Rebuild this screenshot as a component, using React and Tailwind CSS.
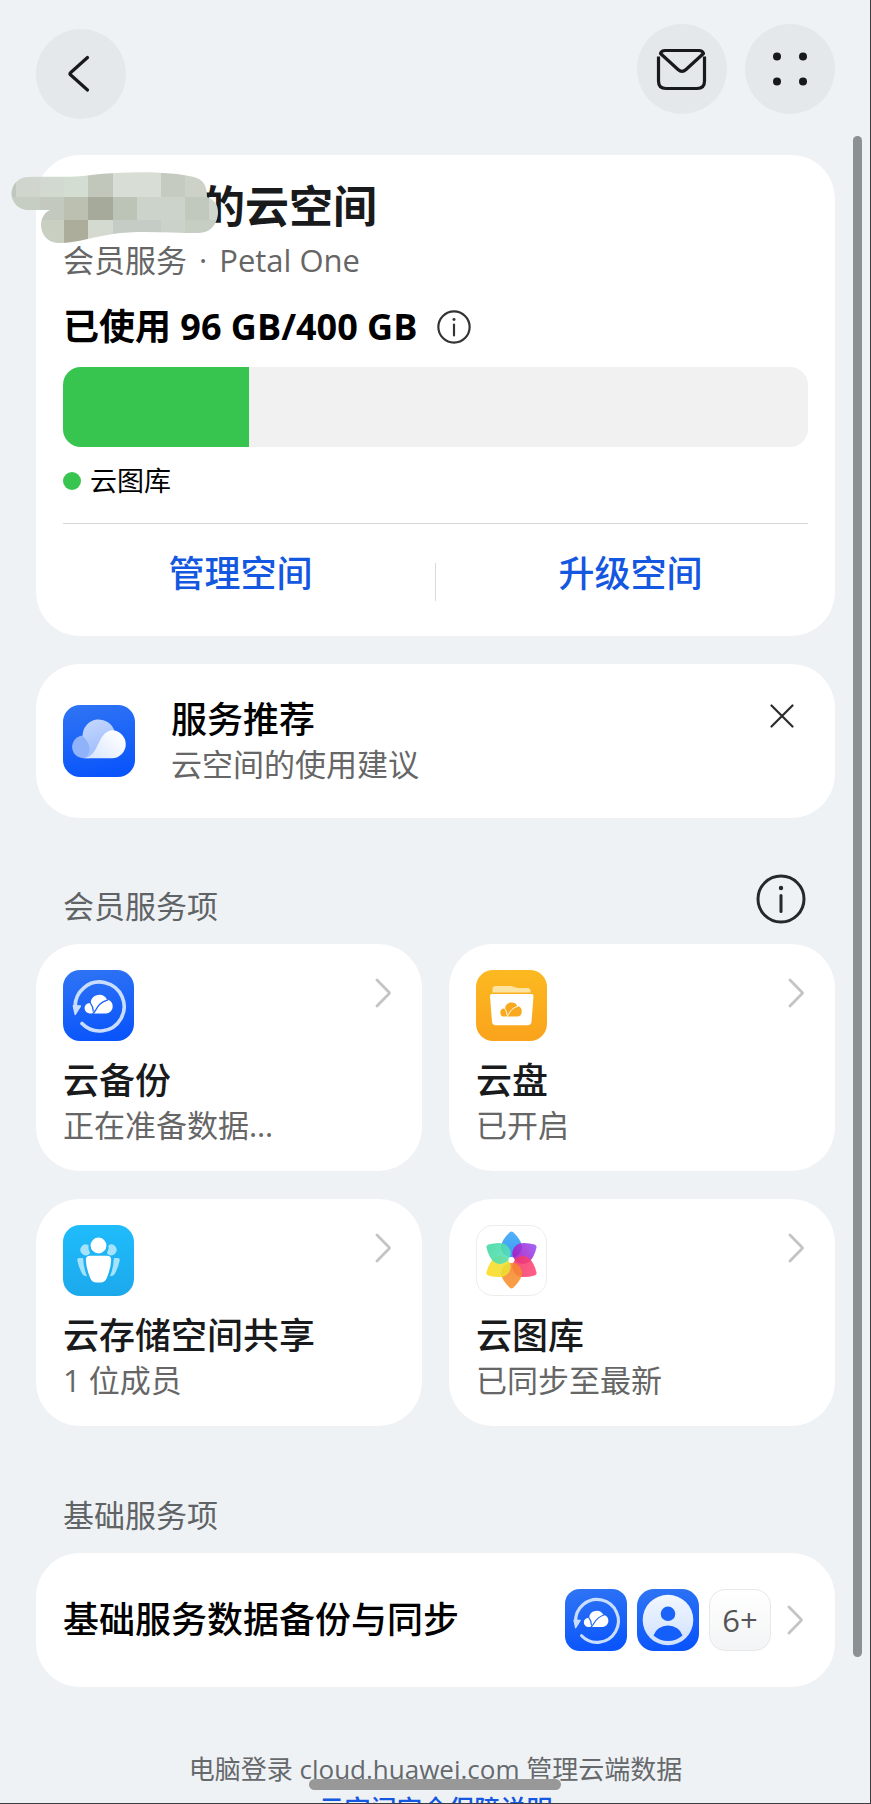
import React, { useId, useState } from "react";

const Cloud = ({ fill, line }) => (
  <>
    <path
      fill={fill}
      d="M5.5 19.5a5.3 5.3 0 0 1-.3-10.6h.9A8.7 8.7 0 0 1 22.4 5.4 6.8 7.1 0 0 1 22 19.5Z"
    />
    <path
      d="M5.5 8.3c2 2.6 3.2 6 3.3 9.2M8 19.8c4.5-2.8 4-11 15.5-14"
      fill="none"
      stroke={line}
      strokeWidth="1.3"
    />
  </>
);

const BlueTile = ({ id, size = 71 }) => (
  <>
    <defs>
      <linearGradient id={id} x1="0.2" y1="0" x2="0.4" y2="1">
        <stop offset="0" stopColor="#2f74f4" />
        <stop offset="1" stopColor="#0a55fb" />
      </linearGradient>
    </defs>
    <rect width={size} height={size} rx="17" fill={`url(#${id})`} />
  </>
);

const BackupIcon = ({ className }) => {
  const id = useId();
  return (
    <svg viewBox="0 0 71 71" className={className} aria-hidden="true">
      <BlueTile id={id} />
      <path
        d="M19 53.5A24.5 24.5 0 1 0 12.2 38"
        fill="none"
        stroke="#c9defe"
        strokeWidth="3.6"
        strokeLinecap="round"
      />
      <path
        d="M10.4 35.8l7 .2-5.2 8.4Z"
        fill="#c9defe"
        stroke="#c9defe"
        strokeWidth="1.5"
        strokeLinejoin="round"
      />
      <g transform="translate(21.5 24)">
        <Cloud fill="#ffffff" line="#1a62f8" />
      </g>
    </svg>
  );
};

const DriveIcon = ({ className }) => {
  const id = useId();
  return (
    <svg viewBox="0 0 71 71" className={className} aria-hidden="true">
      <defs>
        <linearGradient id={id} x1="0" y1="0" x2="0" y2="1">
          <stop offset="0" stopColor="#fcb920" />
          <stop offset="1" stopColor="#faa31c" />
        </linearGradient>
      </defs>
      <rect width="71" height="71" rx="17" fill={`url(#${id})`} />
      <path
        d="M16.5 22.5v-3.5q0-3 3-3h15q2 0 4 1l1.5.6q1 .4 2.500.4h9q3 0 3 3v1.5Z"
        fill="#fde3a2"
      />
      <path
        d="M16 24h39.5q2.200 0 2 2.200l-2 25.600q-.4 3.400-3.600 3.400H19.600q-3.200 0-3.600-3.400l-2-25.600q-.2-2.200 2-2.200Z"
        fill="#ffffff"
      />
      <g transform="translate(24.3 31.8) scale(0.76)">
        <Cloud fill="#f9a91d" line="#ffffff" />
      </g>
    </svg>
  );
};

const ShareIcon = ({ className }) => {
  const id = useId();
  return (
    <svg viewBox="0 0 71 71" className={className} aria-hidden="true">
      <defs>
        <linearGradient id={id} x1="0" y1="0" x2="0" y2="1">
          <stop offset="0" stopColor="#1fbcfb" />
          <stop offset="1" stopColor="#1ca9ec" />
        </linearGradient>
      </defs>
      <rect width="71" height="71" rx="17" fill={`url(#${id})`} />
      <g fill="#a4e2fd">
        <path d="M25.5 20.2a5.4 5.4 0 1 0 .6 9l1-1.2a11 11 0 0 1-1.6-7.8Z" />
        <path d="M45.5 20.2a5.4 5.4 0 1 1-.6 9l-1-1.2a11 11 0 0 0 1.6-7.8Z" />
        <path d="M16 33h3.5q.6 0 .7.8.2 9 3.8 17.4-3.6 0-5.2-3.2Q15.5 42 14.2 35q0-1.8 1.8-2Z" />
        <path d="M55 33h-3.5q-.6 0-.7.8-.2 9-3.8 17.4 3.6 0 5.2-3.2Q55.5 42 56.8 35q0-1.8-1.8-2Z" />
      </g>
      <circle cx="35.5" cy="20.5" r="7.9" fill="#fff" />
      <path
        d="M27 30.8h17q4.3 0 4.2 4.2-.4 8-4.2 17.5-1.8 5-6.5 5h-4q-4.7 0-6.5-5Q23.2 43 22.8 35q-.1-4.2 4.2-4.2Z"
        fill="#fff"
      />
    </svg>
  );
};

const petals = [
  { angle: 0, from: "#3ba7f9", to: "#1f8df0" },
  { angle: 60, from: "#9550f2", to: "#b013bd" },
  { angle: 120, from: "#ff4a78", to: "#f2376b" },
  { angle: 180, from: "#f9922c", to: "#f58430" },
  { angle: 240, from: "#ffd91c", to: "#e6e23c" },
  { angle: 300, from: "#3fd9a0", to: "#5ce0b8" },
];

const GalleryIcon = ({ className }) => {
  const id = useId();
  return (
    <svg viewBox="0 0 72 72" className={className} aria-hidden="true">
      <rect x="0.5" y="0.5" width="71" height="71" rx="17" fill="#fff" stroke="#ededed" />
      {petals.map((p, i) => (
        <g key={p.angle} transform={`rotate(${p.angle} 36 35.5)`}>
          <defs>
            <linearGradient id={`${id}${i}`} x1="0" y1="0" x2="0" y2="1">
              <stop offset="0" stopColor={p.from} />
              <stop offset="1" stopColor={p.to} />
            </linearGradient>
          </defs>
          <path
            d="M34.2 7.300q1.800-1.600 3.600 0Q44.800 14 46.400 20.200A10.600 10.600 0 1 1 25.600 20.200Q27.200 14 34.200 7.300Z"
            fill={`url(#${id}${i})`}
            opacity="0.88"
          />
        </g>
      ))}
      <circle cx="36" cy="35.5" r="3" fill="#fff" />
    </svg>
  );
};

const ContactIcon = ({ className }) => {
  const id = useId();
  return (
    <svg viewBox="0 0 62 62" className={className} aria-hidden="true">
      <BlueTile id={id} size={62} />
      <defs>
        <linearGradient id={`${id}c`} x1="0" y1="0" x2="0" y2="1">
          <stop offset="0" stopColor="#f2f7ff" />
          <stop offset="1" stopColor="#cfe0fd" />
        </linearGradient>
      </defs>
      <circle cx="31" cy="31" r="25.3" fill={`url(#${id}c)`} />
      <circle cx="31" cy="24.8" r="7.3" fill="#1b63f8" />
      <path d="M16.500 46.500a15 13.500 0 0 1 29 0Q39 52 31 52t-14.500-5.500Z" fill="#145ef9" />
    </svg>
  );
};

const ServiceIcon = ({ className }) => {
  const id = useId();
  return (
    <svg viewBox="0 0 72 72" className={className} aria-hidden="true">
      <BlueTile id={id} size={72} />
      <defs>
        <linearGradient id={`${id}w`} x1="1" y1="0.3" x2="0" y2="1">
          <stop offset="0" stopColor="#ffffff" />
          <stop offset="1" stopColor="#d4e3ff" />
        </linearGradient>
        <linearGradient id={`${id}m`} x1="0.2" y1="0" x2="0.5" y2="1">
          <stop offset="0" stopColor="#c3d6fe" />
          <stop offset="1" stopColor="#9cbcfc" />
        </linearGradient>
      </defs>
      <path
        d="M20.5 53.300a11.400 11.400 0 1 1 9-18.400C33 40 31 48 26 53.300Z"
        fill="#8fb2fb"
      />
      <path
        d="M22 53.300C28 48 29 40 19.600 31A16.300 16.300 0 0 1 51.500 26Q44 46 22 53.300Z"
        fill={`url(#${id}m)`}
      />
      <path
        d="M21 53.300C37 51 33 28.500 48.500 25.300A14 14 0 0 1 49 53.300Z"
        fill={`url(#${id}w)`}
      />
    </svg>
  );
};

const InfoIcon = ({ className, strokeWidth }) => (
  <svg
    viewBox="0 0 50 50"
    className={className}
    fill="none"
    stroke="currentColor"
    strokeWidth={strokeWidth}
    strokeLinecap="round"
    aria-hidden="true"
  >
    <circle cx="25" cy="25" r="23" />
    <path d="M25 21.5v16" />
    <circle cx="25" cy="14" r="2.2" fill="currentColor" stroke="none" />
  </svg>
);

const Chevron = () => (
  <svg
    viewBox="0 0 16 30"
    className="h-[30px] w-4 shrink-0"
    fill="none"
    stroke="#c3c4c5"
    strokeWidth="2.8"
    strokeLinecap="round"
    strokeLinejoin="round"
    aria-hidden="true"
  >
    <path d="M2 2l12 12.2q.8.8 0 1.6L2 28" />
  </svg>
);

// [x, y, width, height, colour]
const blocks = [
  [0, 0, 5, 25, "#bfc8bf"],
  [5, 0, 24, 25, "#d0d6ce"],
  [29, 0, 24, 25, "#d2d9d0"],
  [53, 0, 24, 25, "#d3ddd2"],
  [77, 0, 25, 25, "#c1c7bb"],
  [102, 0, 48, 25, "#d8ded5"],
  [150, 0, 24, 25, "#c5cbc0"],
  [174, 0, 34, 25, "#ccd2c8"],
  [0, 25, 29, 23, "#c6cdc3"],
  [29, 25, 24, 23, "#c3c9be"],
  [53, 25, 24, 23, "#bbc0b1"],
  [77, 25, 25, 23, "#a5aa9a"],
  [102, 25, 24, 23, "#bcc4b8"],
  [126, 25, 48, 23, "#cbd3ca"],
  [174, 25, 24, 23, "#c1c9be"],
  [198, 25, 10, 23, "#cfd6ce"],
  [29, 48, 24, 24, "#c9d0c2"],
  [53, 48, 24, 24, "#acae9b"],
  [77, 48, 25, 24, "#d5dad0"],
  [102, 48, 48, 24, "#c5ccc5"],
  [150, 48, 24, 24, "#cbd2c9"],
  [174, 48, 34, 24, "#c6cdc3"],
];

const MaskedName = () => {
  const id = useId();
  return (
    <svg
      viewBox="0 0 208 72"
      className="absolute top-[-8px] left-[-52px] h-[72px] w-[208px]"
      role="img"
      aria-label="***"
    >
      <clipPath id={id}>
        <path d="M17 5C40 4 60 6 80 3 115-1 160-1 183 5c10 3 13 9 13 20 8 3 11 8 11 15 0 10-6 21-20 21-28 0-60-3-85 1-20 3-40 10-56 9-10-1-16-9-16-18 0-7 4-13 9-15H17A16.5 16.5 0 0 1 17 5Z" />
      </clipPath>
      <g clipPath={`url(#${id})`} shapeRendering="crispEdges">
        {blocks.map(([x, y, w, h, fill]) => (
          <rect key={`${x}-${y}`} x={x} y={y} width={w} height={h} fill={fill} />
        ))}
      </g>
    </svg>
  );
};

const services = [
  { title: "云备份", status: "正在准备数据…", Icon: BackupIcon },
  { title: "云盘", status: "已开启", Icon: DriveIcon },
  { title: "云存储空间共享", status: "1 位成员", Icon: ShareIcon },
  { title: "云图库", status: "已同步至最新", Icon: GalleryIcon },
];

const ServiceCard = ({ title, status, Icon }) => (
  <a href="#" className="block rounded-[44px] bg-white px-[27px] pt-[26px] pb-6">
    <div className="flex items-start justify-between">
      <Icon className="size-[71px]" />
      <span className="pt-2 pr-1">
        <Chevron />
      </span>
    </div>
    <h3 className="mt-[18px] text-4xl leading-[44px] font-medium text-[#191a1c]">{title}</h3>
    <p className="text-[31px] leading-[44px] text-[#666]">{status}</p>
  </a>
);

const App = () => {
  const [showTip, setShowTip] = useState(true);
  const used = 100;
  const total = 400;

  return (
    <div className="relative h-screen overflow-hidden border-r border-b border-[#3c3c3e] bg-[#eff2f5] font-['Open_Sans','Noto_Sans_CJK_SC',sans-serif] text-black">
      <div className="pr-[35px] pl-9">
        <header className="flex justify-between pt-6">
          <button
            aria-label="返回"
            className="mt-[5px] flex size-[90px] items-center justify-center rounded-full bg-[#e5e8ea]"
          >
            <svg
              viewBox="0 0 90 90"
              className="size-full"
              fill="none"
              stroke="#17191b"
              strokeWidth="3.2"
              strokeLinecap="round"
              strokeLinejoin="round"
            >
              <path d="M51.5 28.5L34.5 43.8q-1 1 0 2L51.5 61" />
            </svg>
          </button>
          <div className="flex gap-[18px]">
            <button aria-label="消息" className="size-[90px] rounded-full bg-[#e5e8ea]">
              <svg
                viewBox="0 0 90 90"
                className="size-full"
                fill="none"
                stroke="#17191b"
                strokeWidth="3.2"
                strokeLinecap="butt"
                strokeLinejoin="round"
              >
                <path d="M23.5 29.5q1-3 4.500-3h34q3.500 0 4.500 3L49 45.500q-4 3.600-8 0Z" />
                <path d="M21.500 32.500v24.500q0 7.500 7.500 7.500h31q7.500 0 7.500-7.500V32.500" />
              </svg>
            </button>
            <button aria-label="更多" className="size-[90px] rounded-full bg-[#e5e8ea]">
              <svg viewBox="0 0 90 90" className="size-full" fill="#17191b">
                <circle cx="32" cy="32.5" r="4" />
                <circle cx="58" cy="32.5" r="4" />
                <circle cx="32" cy="57.5" r="4" />
                <circle cx="58" cy="57.5" r="4" />
              </svg>
            </button>
          </div>
        </header>

        <section className="mt-9 rounded-[44px] bg-white px-[27px] pt-[25px] pb-[38px]">
          <h1 className="relative flex text-[44px] leading-[52px] font-bold text-[#191a1c]">
            <span className="w-[138px]" />
            的云空间
            <MaskedName />
          </h1>
          <p className="mt-[6px] text-[31px] leading-[44px] text-[#666]">
            会员服务<span className="mx-1"> · </span>Petal One
          </p>
          <div className="mt-[21px] flex items-center gap-5">
            <h2 className="text-4xl leading-[48px] font-bold">已使用 96 GB/400 GB</h2>
            <button aria-label="空间说明" className="text-[#333]">
              <InfoIcon className="size-[34px]" strokeWidth="3.2" />
            </button>
          </div>
          <div className="mt-4 h-20 overflow-hidden rounded-[18px] bg-[#f1f1f1]">
            <div className="h-full bg-[#37c54f]" style={{ width: `${(used / total) * 100}%` }} />
          </div>
          <div className="mt-4 flex items-center gap-[9px] text-[27px] leading-9">
            <span className="size-[18px] rounded-full bg-[#37c54f]" />
            云图库
          </div>
          <div className="mt-6 flex items-center border-t border-[#d6d6d6] pt-[26px] text-4xl leading-[48px] font-medium text-[#1457e0]">
            <button className="flex-1">管理空间</button>
            <span className="mx-[17px] h-[38px] w-px translate-y-2 bg-[#d9d9d9]" />
            <button className="flex-1">升级空间</button>
          </div>
        </section>

        {showTip && (
          <section className="mt-7 flex items-center rounded-[44px] bg-white py-7 pr-[41px] pl-[27px]">
            <ServiceIcon className="size-[72px]" />
            <div className="ml-9 flex-1">
              <h2 className="pt-[6px] text-4xl leading-[44px] font-medium">服务推荐</h2>
              <p className="pb-1 text-[31px] leading-[44px] text-[#666]">云空间的使用建议</p>
            </div>
            <button aria-label="关闭" className="self-start pt-3" onClick={() => setShowTip(false)}>
              <svg
                viewBox="0 0 24 24"
                className="size-6"
                fill="none"
                stroke="#2b2c2e"
                strokeWidth="2.2"
                strokeLinecap="round"
              >
                <path d="M1.5 1.5l21 21M22.5 1.5l-21 21" />
              </svg>
            </button>
          </section>
        )}

        <div className="mt-14 flex items-start justify-between pr-[29px] pl-[27px]">
          <h2 className="pt-[10px] text-[31px] leading-[44px] text-[#606366]">会员服务项</h2>
          <button aria-label="会员服务说明" className="text-[#26292b]">
            <InfoIcon className="size-[50px]" strokeWidth="3" />
          </button>
        </div>

        <div className="mt-4 grid grid-cols-2 gap-x-[27px] gap-y-7">
          {services.map((s) => (
            <ServiceCard key={s.title} {...s} />
          ))}
        </div>

        <h2 className="mt-[67px] pl-[27px] text-[31px] leading-[44px] text-[#606366]">
          基础服务项
        </h2>
        <a
          href="#"
          className="mt-4 flex items-center rounded-[44px] bg-white py-9 pr-8 pl-[27px]"
        >
          <span className="flex-1 text-4xl leading-[48px] font-medium">基础服务数据备份与同步</span>
          <span className="flex items-center gap-[10px]">
            <BackupIcon className="size-[62px]" />
            <ContactIcon className="size-[62px]" />
            <span className="flex size-[62px] items-center justify-center rounded-2xl border border-[#e7e8e9] bg-linear-to-b from-white to-[#f3f4f5] text-[31px] text-[#555]">
              6+
            </span>
          </span>
          <span className="ml-4">
            <Chevron />
          </span>
        </a>

        <footer className="mt-16 text-center text-[26px] leading-9 text-[#66696c]">
          <p>电脑登录 cloud.huawei.com 管理云端数据</p>
          <a href="#" className="block pt-1 font-medium text-[#1457e0]">
            云空间安全保障说明
          </a>
        </footer>
      </div>

      <div className="absolute top-[136px] right-2 bottom-[146px] w-[9px] rounded-full bg-[#8b9094]" />
      <div className="absolute bottom-[13px] left-1/2 h-[11px] w-[252px] -translate-x-1/2 rounded-full bg-[#989898]" />
    </div>
  );
};

export default App;
